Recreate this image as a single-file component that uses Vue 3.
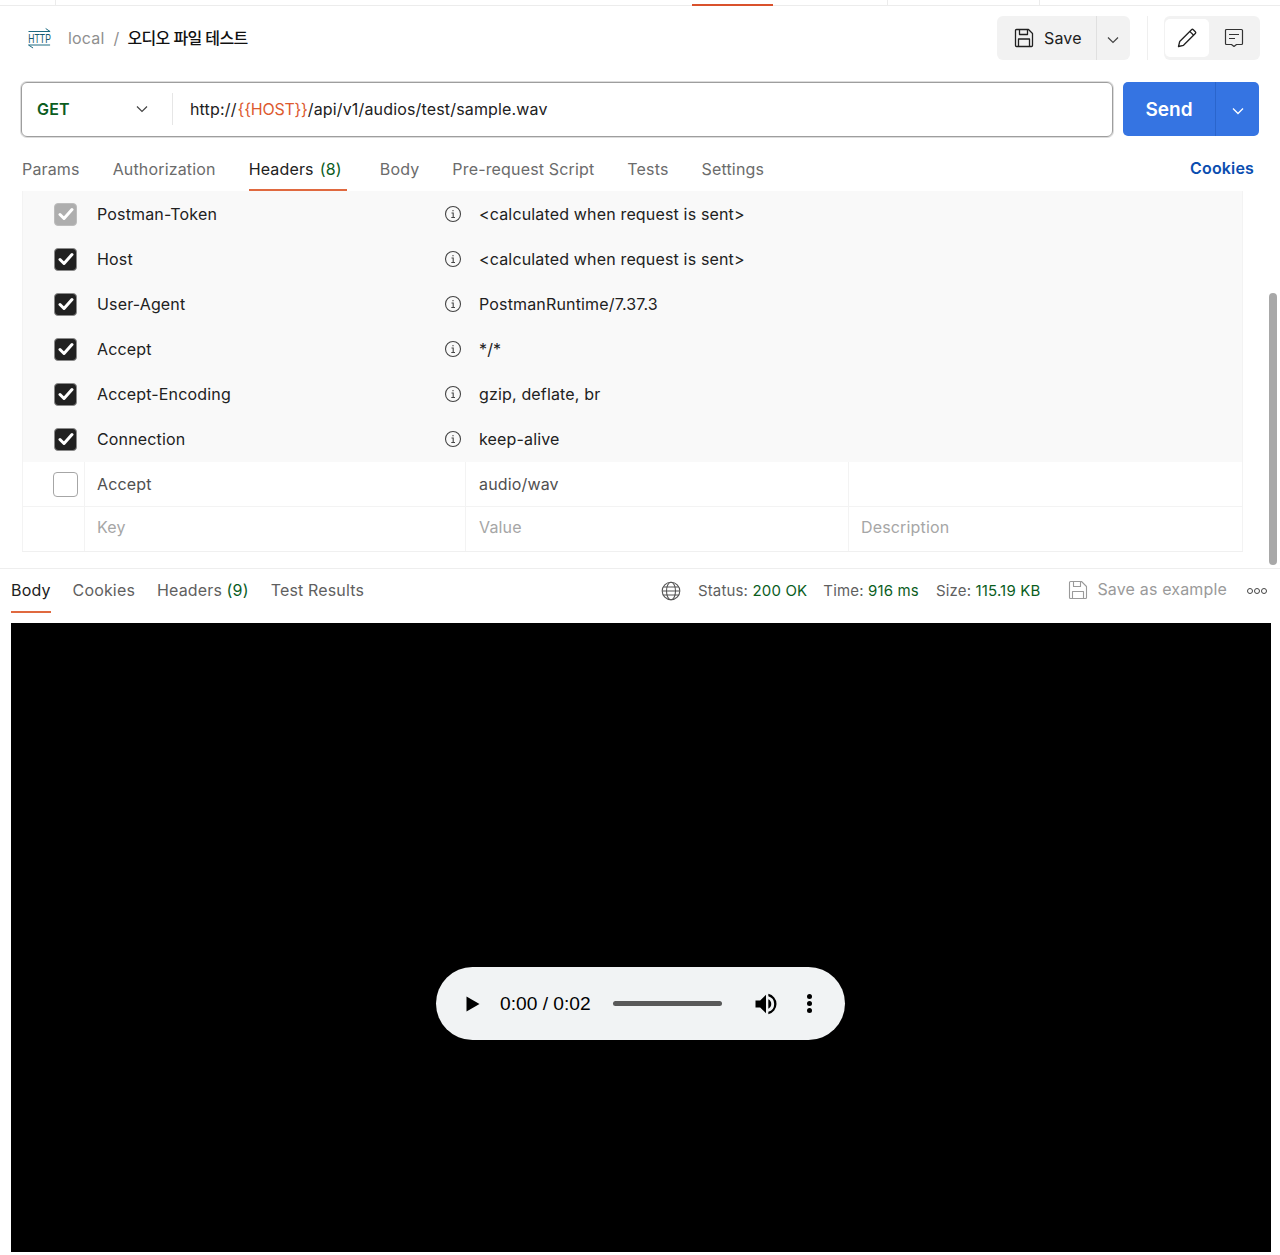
<script setup>
const hostVar = '{' + '{HOST}' + '}'

const requestTabs = [
  { label: 'Params' },
  { label: 'Authorization' },
  { label: 'Headers', count: '(8)', active: true },
  { label: 'Body' },
  { label: 'Pre-request Script' },
  { label: 'Tests' },
  { label: 'Settings' }
]

const autoHeaders = [
  { key: 'Postman-Token', value: '<calculated when request is sent>', locked: true },
  { key: 'Host', value: '<calculated when request is sent>' },
  { key: 'User-Agent', value: 'PostmanRuntime/7.37.3' },
  { key: 'Accept', value: '*/*' },
  { key: 'Accept-Encoding', value: 'gzip, deflate, br' },
  { key: 'Connection', value: 'keep-alive' }
]

const responseTabs = [
  { label: 'Body', active: true },
  { label: 'Cookies' },
  { label: 'Headers', count: '(9)' },
  { label: 'Test Results' }
]
</script>

<template>
  <div class="page">
    <div class="tabstrip">
      <i class="strip-a"></i>
      <i class="strip-b"></i>
      <i class="strip-active"></i>
      <i class="strip-c"></i>
      <i class="strip-d"></i>
    </div>

    <header class="topbar">
      <div class="crumbs">
        <svg class="http-icon" width="24" height="24" viewBox="0 0 38 24" preserveAspectRatio="none" fill="none" stroke="#1c6a80">
          <path vector-effect="non-scaling-stroke" d="M0.800 5.500H35M28 2.500L35 5.500M0.800 19H35M0.800 19L8 22" />
          <text x="0.500" y="17.500" fill="#14596c" stroke="none" font-family="'Liberation Sans', sans-serif" font-size="13.500">HTTP</text>
        </svg>
        <span class="crumb-parent">local</span>
        <span class="crumb-sep">/</span>
        <span class="crumb-name">오디오 파일 테스트</span>
      </div>
      <div class="top-actions">
        <div class="save-group">
          <button type="button" class="save-btn">
            <svg width="20" height="20" viewBox="0 0 20 20" fill="none" stroke="#212121" stroke-width="1.300" stroke-linejoin="round">
              <path d="M1.500 2.500a1 1 0 0 1 1-1h12l4 4v12a1 1 0 0 1-1 1h-15a1 1 0 0 1-1-1z" />
              <path d="M5.500 1.500v5h8v-5M4.500 18.500v-7.500h11v7.500" />
            </svg>
            Save
          </button>
          <button type="button" class="save-more">
            <svg width="12" height="8" viewBox="0 0 12 8" fill="none" stroke="#444" stroke-width="1.200"><path d="M1 1.500l5 5 5-5" /></svg>
          </button>
        </div>
        <span class="top-divider"></span>
        <div class="mode-group">
          <span class="mode-btn mode-btn--on">
            <svg width="20" height="20" viewBox="0 0 20 20" fill="none" stroke="#212121" stroke-width="1.300" stroke-linejoin="round">
              <path d="M1.500 18.500l1.200-5L14.500 1.700a1.300 1.300 0 0 1 1.800 0l2 2a1.300 1.300 0 0 1 0 1.800L6.500 17.300z" />
              <path d="M12.800 3.400l3.800 3.800" />
            </svg>
          </span>
          <span class="mode-btn mode-btn--comment">
            <svg width="20" height="20" viewBox="0 0 20 20" fill="none" stroke="#333" stroke-width="1.200" stroke-linejoin="round">
              <path d="M1.500 2.500a1 1 0 0 1 1-1h15a1 1 0 0 1 1 1v13a1 1 0 0 1-1 1h-5l-2.500 2-2.500-2h-5a1 1 0 0 1-1-1z" />
              <path d="M5 6.500h10M5 10.500h6" />
            </svg>
          </span>
        </div>
      </div>
    </header>

    <section class="urlrow">
      <div class="urlbox">
        <div class="method">
          <span>GET</span>
          <svg width="12" height="8" viewBox="0 0 12 8" fill="none" stroke="#444" stroke-width="1.200"><path d="M1 1.500l5 5 5-5" /></svg>
        </div>
        <div class="url">http://<span class="url-var">{{ hostVar }}</span>/api/v1/audios/test/sample.wav</div>
      </div>
      <div class="send-group">
        <button type="button" class="send-btn">Send</button>
        <button type="button" class="send-more">
          <svg width="12" height="8" viewBox="0 0 12 8" fill="none" stroke="#fff" stroke-width="1.300"><path d="M1 1.500l5 5 5-5" /></svg>
        </button>
      </div>
    </section>

    <nav class="reqtabs">
      <div class="reqtabs-list">
        <span v-for="tab in requestTabs" :key="tab.label" class="reqtab" :class="{ 'is-active': tab.active }">
          {{ tab.label }}<em v-if="tab.count">{{ tab.count }}</em>
        </span>
      </div>
      <span class="cookies">Cookies</span>
    </nav>

    <section class="headers-pane">
      <div class="auto-rows">
        <div v-for="row in autoHeaders" :key="row.key" class="row row--auto">
          <span class="check" :class="{ 'check--locked': row.locked }">
            <svg width="16" height="14" viewBox="0 0 16 14" fill="none" stroke="#fff" stroke-width="3" stroke-linecap="round" stroke-linejoin="round"><path d="M2 7.500l4 4 8-9" /></svg>
          </span>
          <span class="row-key">{{ row.key }}</span>
          <svg class="info" width="18" height="18" viewBox="0 0 18 18" fill="none" stroke="#444" stroke-width="1.100">
            <circle cx="9" cy="9" r="7.500" />
            <path d="M7.500 8h1.700v4.500M7.300 12.500h3.700M9 5v1.200" />
          </svg>
          <span class="row-value">{{ row.value }}</span>
        </div>
      </div>
      <div class="grid-row">
        <div class="cell cell--check"><span class="check check--empty"></span></div>
        <div class="cell cell--text">Accept</div>
        <div class="cell cell--text">audio/wav</div>
        <div class="cell cell--desc"></div>
      </div>
      <div class="grid-row grid-row--last">
        <div class="cell cell--check"></div>
        <div class="cell cell--text cell--hint">Key</div>
        <div class="cell cell--text cell--hint">Value</div>
        <div class="cell cell--desc cell--hint">Description</div>
      </div>
      <div class="scroll-thumb"></div>
    </section>

    <section class="response-bar">
      <div class="restabs">
        <span v-for="tab in responseTabs" :key="tab.label" class="restab" :class="{ 'is-active': tab.active }">
          {{ tab.label }}<em v-if="tab.count">{{ tab.count }}</em>
        </span>
      </div>
      <div class="res-meta">
        <svg width="20" height="20" viewBox="0 0 20 20" fill="none" stroke="#555" stroke-width="1.100">
          <circle cx="10" cy="10" r="8.800" />
          <ellipse cx="10" cy="10" rx="4.500" ry="8.800" />
          <path d="M2.300 6h15.400M2.300 14h15.400M1.200 10h17.600" />
        </svg>
        <span class="stat">Status: <b>200 OK</b></span>
        <span class="stat stat--time">Time: <b>916 ms</b></span>
        <span class="stat">Size: <b>115.19 KB</b></span>
        <svg class="save-example-icon" width="20" height="20" viewBox="0 0 20 20" fill="none" stroke="#9a9a9a" stroke-width="1.100" stroke-linejoin="round">
          <path d="M1.500 2.500a1 1 0 0 1 1-1h11l5 5v11a1 1 0 0 1-1 1h-15a1 1 0 0 1-1-1z" />
          <path d="M5.500 1.500v5h7v-5M4.500 18.500v-7h11v7" />
        </svg>
        <span class="save-example">Save as example</span>
        <span class="dots"><i></i><i></i><i></i></span>
      </div>
    </section>

    <section class="preview">
      <div class="player">
        <svg class="play" width="14" height="16" viewBox="0 0 14 16"><path d="M0.500 0.500L13.500 8L0.500 15.500z" fill="#000" /></svg>
        <span class="time">0:00 / 0:02</span>
        <span class="track"></span>
        <svg class="volume" width="28" height="28" viewBox="0 0 24 24" fill="#000">
          <path d="M3 9v6h4l5 5V4L7 9z" />
          <path d="M14 7.970v8.050A4.500 4.500 0 0 0 16.500 12 4.500 4.500 0 0 0 14 7.970z" />
          <path d="M14 3.230v2.060A7 7 0 0 1 19 12a7 7 0 0 1-5 6.710v2.060A9 9 0 0 0 21 12a9 9 0 0 0-7-8.770z" />
        </svg>
        <span class="kebab"><i></i><i></i><i></i></span>
      </div>
    </section>
  </div>
</template>

<style scoped>
.page {
  width: 1280px;
  height: 1255px;
  overflow: hidden;
  background: #fff;
  color: #212121;
  font-family: Inter, "Noto Sans CJK KR", "Liberation Sans", sans-serif;
  font-size: 16px;
  letter-spacing: 0.16px;
}

button {
  border: 0;
  font: inherit;
  letter-spacing: inherit;
  color: inherit;
  padding: 0;
}

.tabstrip {
  display: grid;
  grid-template-columns: 56px 636px 81px 115px 152px 1fr;
  height: 5px;
  border-bottom: 1px solid #ececec;
  box-sizing: content-box;
}

.strip-a,
.strip-c,
.strip-d {
  border-right: 1px solid #ececec;
}

.strip-active {
  grid-column: 3;
  border-bottom: 2px solid #d9512c;
  height: 6px;
  box-sizing: border-box;
}

.strip-b {
  grid-column: 2;
}

.topbar {
  display: flex;
  justify-content: space-between;
  align-items: center;
  height: 44px;
  margin-top: 10px;
  padding: 0 20px 0 28px;
}

.crumbs {
  display: flex;
  align-items: center;
}

.http-icon {
  margin-right: 16px;
}

.crumb-parent,
.crumb-sep {
  color: #8f8f8f;
}

.crumb-sep {
  margin: 0 8px 0 9px;
}

.crumb-name {
  margin-bottom: 2px;
  color: #111;
  font-weight: 500;
  letter-spacing: -0.6px;
}

.top-actions {
  display: flex;
  align-items: center;
}

.save-group {
  display: flex;
  width: 133px;
  height: 44px;
  border-radius: 6px;
  background: #f2f2f2;
}

.save-btn {
  display: flex;
  align-items: center;
  gap: 10px;
  width: 100px;
  padding-left: 17px;
  background: none;
  border-right: 1px solid #e0e0e0;
  box-sizing: border-box;
}

.save-more {
  flex: 1;
  padding-right: 2px;
  background: none;
}

.top-divider {
  width: 1px;
  height: 44px;
  margin: 0 16px 0 17px;
  background: #efefef;
}

.mode-group {
  display: flex;
  width: 96px;
  height: 44px;
  padding: 3px 0 3px 1px;
  border-radius: 6px;
  background: #f2f2f2;
  box-sizing: border-box;
}

.mode-btn {
  display: flex;
  align-items: center;
  justify-content: center;
  width: 44px;
  height: 38px;
  border-radius: 5px;
}

.mode-btn--on {
  background: #fff;
}

.mode-btn--comment {
  width: 49px;
}

.urlrow {
  display: flex;
  align-items: center;
  gap: 10px;
  height: 56px;
  margin-top: 21px;
  padding: 0 21px;
}

.urlbox {
  display: flex;
  align-items: center;
  flex: 0 0 1092px;
  height: 55px;
  border: 1px solid #9e9e9e;
  border-radius: 6px;
  box-shadow: 0 0 0 1px #dcdcdc;
  box-sizing: border-box;
}

.method {
  display: flex;
  align-items: center;
  justify-content: space-between;
  width: 151px;
  height: 32px;
  padding: 0 24px 0 15px;
  border-right: 1px solid #e6e6e6;
  box-sizing: border-box;
  color: #0b5d1e;
  font-weight: 600;
}

.url {
  padding-left: 17px;
}

.url-var {
  margin-left: 1px;
  letter-spacing: -0.24px;
  color: #dd5a2f;
}

.send-group {
  display: flex;
  width: 136px;
  height: 54px;
  border-radius: 5px;
  background: #3574e2;
  color: #fff;
}

.send-btn {
  width: 92px;
  background: none;
  border-right: 1px solid #2a65cc;
  box-sizing: content-box;
  font-size: 19px;
  font-weight: 600;
  letter-spacing: 0;
}

.send-more {
  flex: 1;
  background: none;
}

.reqtabs {
  display: flex;
  justify-content: space-between;
  height: 54px;
  padding: 0 26px 0 22px;
}

.reqtabs-list {
  display: flex;
  gap: 33px;
}

.reqtab {
  height: 53px;
  padding-top: 22px;
  box-sizing: border-box;
  color: #6b6b6b;
  white-space: nowrap;
}

.reqtab em,
.restab em {
  margin-left: 6px;
  font-style: normal;
  color: #0b5d1e;
}

.restab em {
  margin-left: 4.500px;
}

.reqtab.is-active {
  height: 54px;
  padding-right: 5px;
  border-bottom: 2px solid #e0693f;
  color: #212121;
}

.cookies {
  padding-top: 21px;
  color: #0a4db0;
  font-weight: 600;
}

.headers-pane {
  position: relative;
  margin: 0 37px 0 22px;
  height: 361px;
  border-bottom: 1px solid #f0f0f0;
  box-sizing: border-box;
}

.auto-rows {
  height: 271px;
  border-left: 1px solid #f3f3f3;
  border-right: 1px solid #f3f3f3;
  background: #f9f9f9;
  box-sizing: border-box;
}

.row {
  display: flex;
  align-items: center;
  height: 45px;
}

.check {
  display: flex;
  align-items: center;
  justify-content: center;
  flex: none;
  width: 23px;
  height: 23px;
  margin-left: 31px;
  border: 1px solid #8a8a8a;
  border-radius: 4px;
  background: #212121;
  box-sizing: border-box;
}

.row .check {
  margin-top: 1px;
}

.check--locked {
  background: #aeaeae;
  border-color: #bdbdbd;
}

.check--empty {
  width: 25px;
  height: 25px;
  margin-left: 30px;
  background: #fff;
  border-color: #a6a6a6;
}

.row-key {
  width: 347px;
  margin-left: 20px;
}

.info {
  flex: none;
}

.row-value {
  margin-left: 17px;
}

.grid-row {
  display: grid;
  grid-template-columns: 62px 381px 383px 1fr;
  height: 45px;
  border-left: 1px solid #f3f3f3;
  border-right: 1px solid #f3f3f3;
  border-bottom: 1px solid #f3f3f3;
  box-sizing: border-box;
}

.grid-row--last {
  height: 44px;
  border-bottom: 0;
}

.cell {
  display: flex;
  align-items: center;
  border-right: 1px solid #f3f3f3;
  box-sizing: border-box;
}

.cell--text {
  padding-left: 12px;
  color: #505050;
}

.cell--text + .cell--text {
  padding-left: 13px;
}

.cell--desc {
  padding-left: 12px;
  border-right: 0;
}

.cell.cell--hint {
  padding-bottom: 5px;
  color: #a6a6a6;
}

.scroll-thumb {
  position: absolute;
  top: 102px;
  left: 1247px;
  width: 8px;
  height: 272px;
  border-radius: 4px;
  background: #a8a8a8;
}

.response-bar {
  display: flex;
  justify-content: space-between;
  height: 55px;
  margin-top: 16px;
  padding: 0 13px 0 11px;
  border-top: 1px solid #eee;
  box-sizing: border-box;
}

.restabs {
  display: flex;
  gap: 22px;
}

.restab {
  height: 44px;
  padding-top: 11px;
  box-sizing: border-box;
  color: #5f5f5f;
  white-space: nowrap;
}

.restab.is-active {
  border-bottom: 2px solid #e0693f;
  color: #212121;
}

.res-meta {
  display: flex;
  align-items: center;
  height: 43px;
  font-size: 15px;
  color: #5f5f5f;
}

.stat {
  margin-left: 17px;
}

.stat--time {
  margin-left: 16px;
}

.stat b {
  font-weight: 400;
  color: #0b5d1e;
}

.save-example-icon {
  margin-left: 28px;
  margin-bottom: 2px;
}

.save-example {
  margin-left: 9px;
  margin-bottom: 3px;
  font-size: 16px;
  color: #9a9a9a;
}

.dots {
  display: flex;
  gap: 1px;
  margin-left: 20px;
}

.dots i {
  width: 6px;
  height: 6px;
  border: 1px solid #444;
  border-radius: 50%;
  box-sizing: border-box;
}

.preview {
  display: flex;
  align-items: center;
  justify-content: center;
  width: 1260px;
  height: 629px;
  margin: 0 0 0 11px;
  background: #000;
}

.player {
  display: flex;
  align-items: center;
  width: 409px;
  height: 73px;
  margin-left: -1px;
  margin-top: 132px;
  border-radius: 37px;
  background: #f1f3f4;
  box-sizing: border-box;
  font-family: "Liberation Sans", Arial, sans-serif;
  font-size: 19.200px;
  letter-spacing: 0;
  color: #000;
}

.play {
  margin-left: 30px;
}

.time {
  margin-left: 20px;
  white-space: nowrap;
}

.track {
  width: 109px;
  height: 5px;
  margin-left: 22px;
  border-radius: 3px;
  background: #595959;
}

.volume {
  margin-left: 30px;
}

.kebab {
  display: flex;
  flex-direction: column;
  gap: 2px;
  margin-left: 27px;
}

.kebab i {
  width: 5px;
  height: 5px;
  border-radius: 50%;
  background: #000;
}
</style>
